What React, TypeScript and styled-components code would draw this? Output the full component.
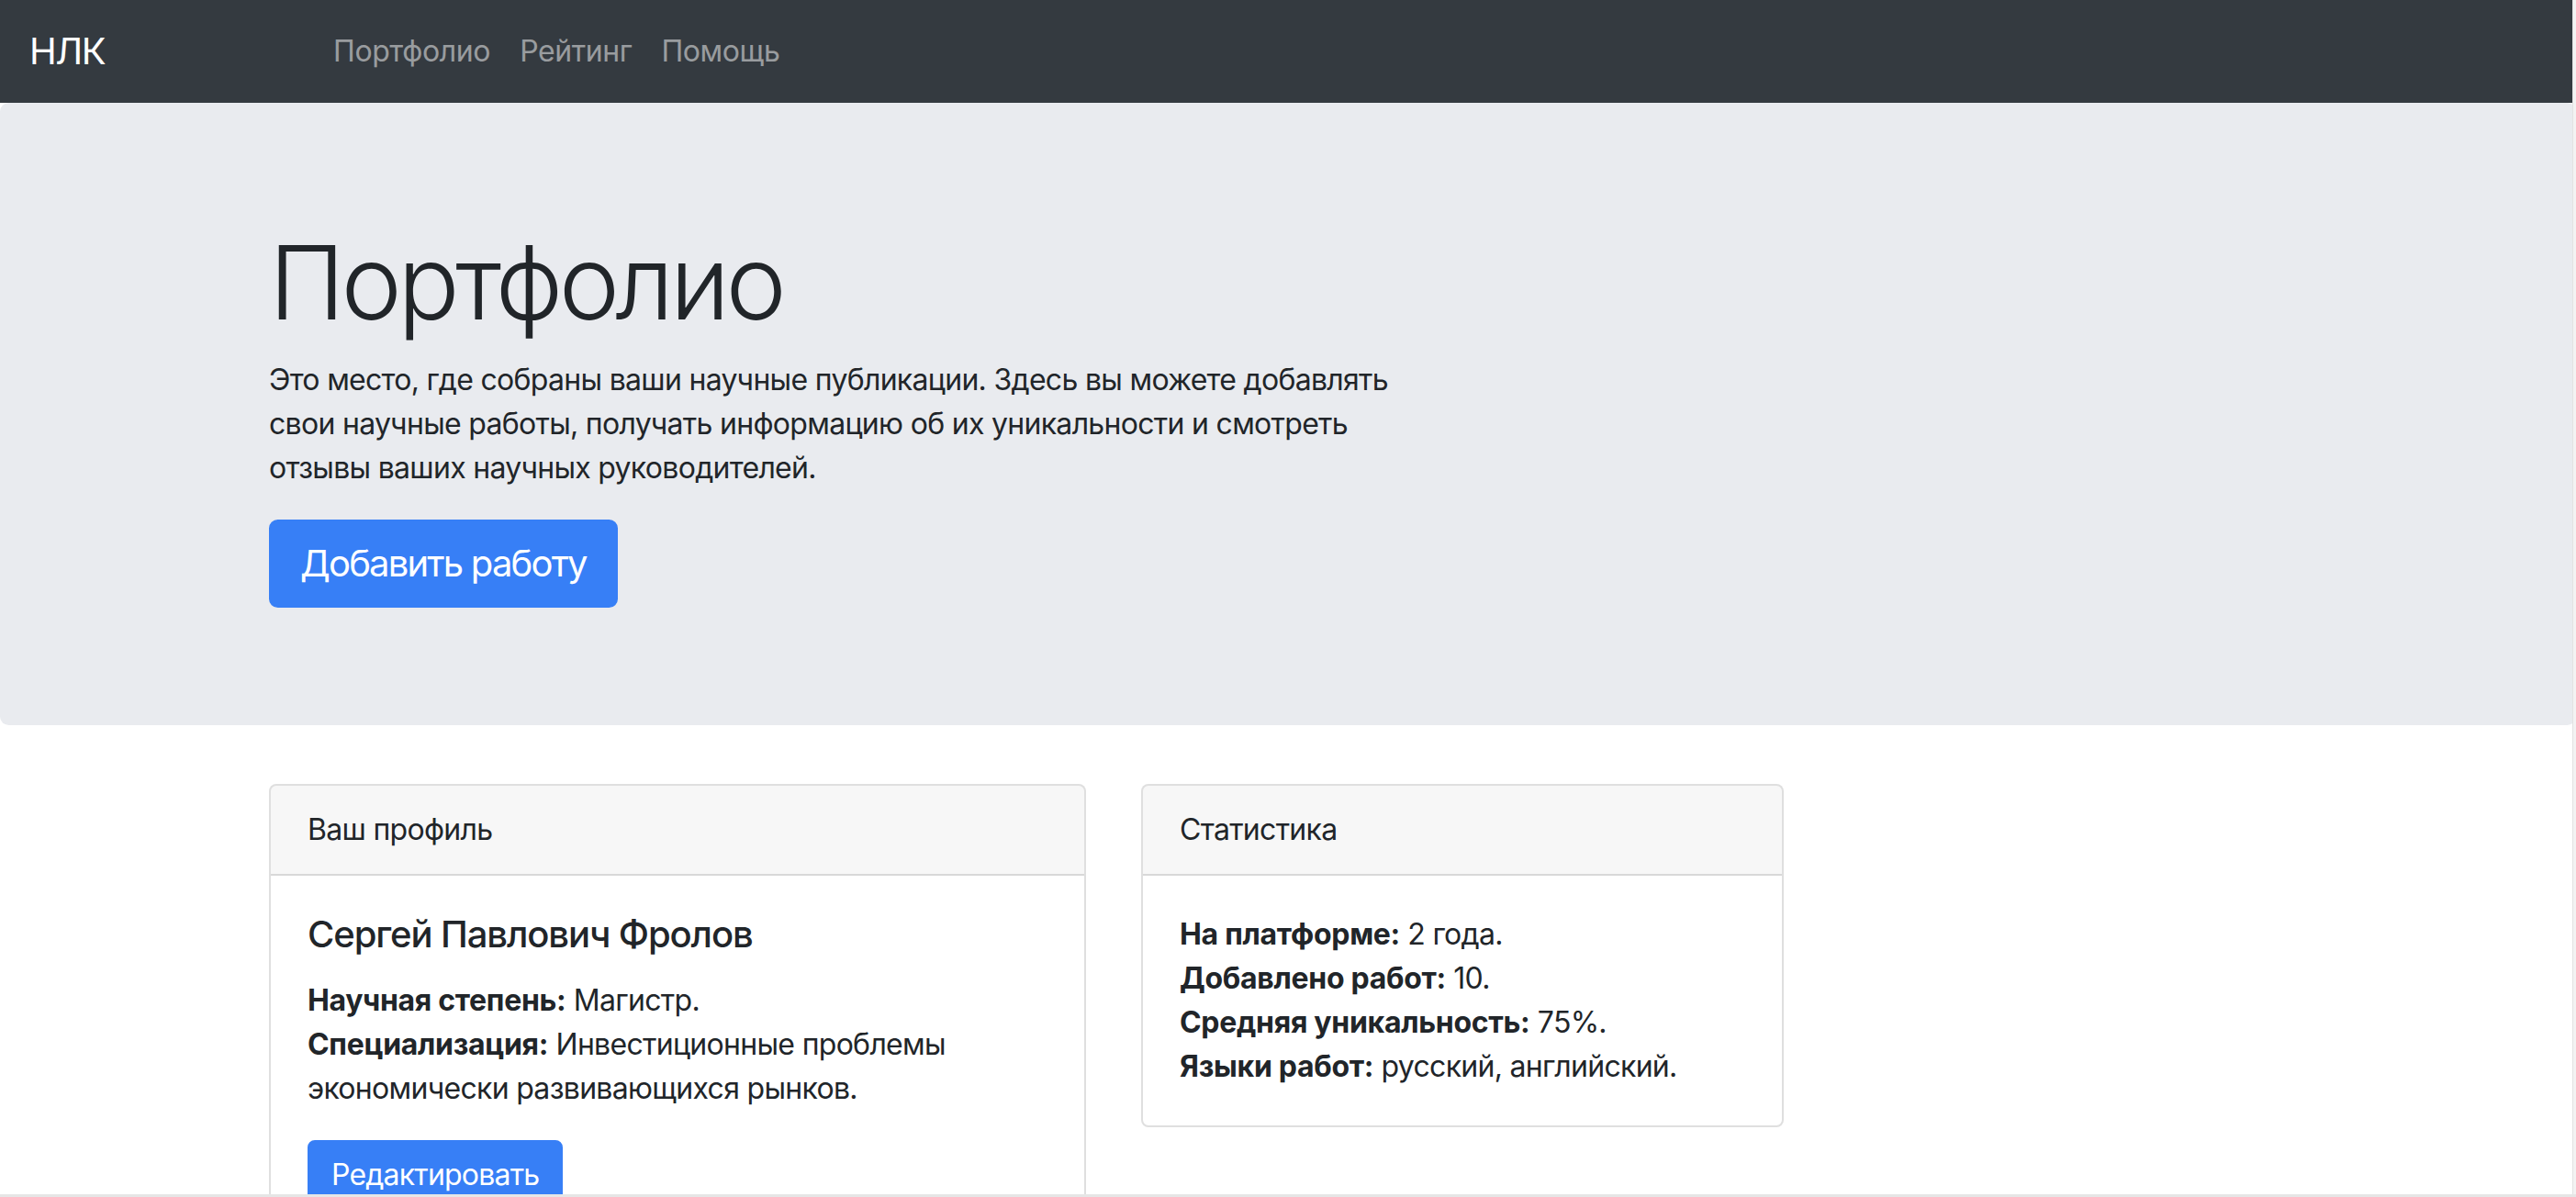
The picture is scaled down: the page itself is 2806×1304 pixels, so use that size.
import React from "react";
import styled, { createGlobalStyle } from "styled-components";

const GlobalStyle = createGlobalStyle`
  html, body {
    margin: 0;
    padding: 0;
    background: #ffffff;
    overflow: hidden;
  }
  body {
    font-family: Inter, "Noto Sans", "DejaVu Sans", sans-serif;
    font-size: 32px;
    line-height: 1.5;
    letter-spacing: -0.7px;
    color: #212529;
  }
  * { box-sizing: border-box; }
`;

const Page = styled.div`
  width: 100%;
  min-height: 100vh;
`;

const Navbar = styled.nav`
  display: flex;
  align-items: center;
  height: 112px;
  padding: 16px 32px;
  background: #343a40;
`;

const Brand = styled.a`
  display: block;
  width: 283px;
  margin-right: 32px;
  padding: 10px 0;
  font-size: 40px;
  line-height: 60px;
  letter-spacing: -1.5px;
  color: #ffffff;
  text-decoration: none;
`;

const NavList = styled.ul`
  display: flex;
  margin: 0;
  padding: 0;
  list-style: none;
`;

const NavLink = styled.a`
  display: block;
  padding: 16px;
  font-size: 32px;
  line-height: 48px;
  letter-spacing: -0.4px;
  color: rgba(255, 255, 255, 0.5);
  text-decoration: none;
`;

const Jumbotron = styled.section`
  background: #e9ebef;
  border-radius: 9.6px;
  padding: 128px 64px;
  margin-bottom: 64px;
`;

const Container = styled.div`
  width: 2280px;
  margin: 0 auto;
  padding: 0 30px;
`;

const Display = styled.h1`
  margin: 0 0 16px;
  font-size: 112px;
  font-weight: 300;
  line-height: 1.2;
  letter-spacing: -4.5px;
`;

const Lead = styled.p`
  margin: 0 0 32px;
  font-size: 32px;
  line-height: 48px;
`;

const Button = styled.button<{ $size?: "lg" | "md" }>`
  display: inline-block;
  font-family: inherit;
  color: #ffffff;
  background: #377ff6;
  border: 2px solid #377ff6;
  cursor: pointer;
  font-size: ${(p) => (p.$size === "lg" ? "40px" : "32px")};
  line-height: ${(p) => (p.$size === "lg" ? "60px" : "48px")};
  letter-spacing: ${(p) => (p.$size === "lg" ? "-1.8px" : "-0.8px")};
  padding: ${(p) => (p.$size === "lg" ? "16px 32px" : "12px 24px")};
  border-radius: ${(p) => (p.$size === "lg" ? "9.6px" : "8px")};
`;

const CardRow = styled.div`
  display: grid;
  grid-template-columns: 890px 700px;
  column-gap: 60px;
  align-items: start;
`;

const Card = styled.div`
  border: 2px solid rgba(0, 0, 0, 0.125);
  border-radius: 8px;
  background: #ffffff;
  overflow: hidden;
`;

const CardHeader = styled.div`
  padding: 24px 40px;
  background: rgba(0, 0, 0, 0.03);
  border-bottom: 2px solid rgba(0, 0, 0, 0.125);
  font-size: 32px;
  line-height: 48px;
`;

const CardBody = styled.div`
  padding: 40px;
`;

const CardTitle = styled.h5`
  margin: 0 0 24px;
  font-size: 40px;
  font-weight: 500;
  line-height: 48px;
  letter-spacing: -1.1px;
`;

const CardText = styled.p<{ $last?: boolean }>`
  margin: 0 0 ${(p) => (p.$last ? "0" : "32px")};
  font-size: 32px;
  line-height: 48px;
`;

const Label = styled.b`
  font-weight: 700;
  letter-spacing: -0.3px;
`;

const ScrollEdgeRight = styled.div`
  position: fixed;
  top: 0;
  right: 0;
  width: 4px;
  height: 100vh;
  background: #f3f3f3;
  border-left: 1px solid #e2e2e2;
`;

const ScrollEdgeBottom = styled.div`
  position: fixed;
  left: 0;
  bottom: 0;
  width: 100%;
  height: 3px;
  background: #e6e6e6;
`;

export default function App() {
  return (
    <Page>
      <GlobalStyle />
      <Navbar>
        <Brand href="#">НЛК</Brand>
        <NavList>
          <li><NavLink href="#">Портфолио</NavLink></li>
          <li><NavLink href="#">Рейтинг</NavLink></li>
          <li><NavLink href="#">Помощь</NavLink></li>
        </NavList>
      </Navbar>

      <Jumbotron>
        <Container>
          <Display>Портфолио</Display>
          <Lead>
            Это место, где собраны ваши научные публикации. Здесь вы можете добавлять
            <br />
            свои научные работы, получать информацию об их уникальности и смотреть
            <br />
            отзывы ваших научных руководителей.
          </Lead>
          <Button $size="lg">Добавить работу</Button>
        </Container>
      </Jumbotron>

      <Container>
        <CardRow>
          <Card>
            <CardHeader>Ваш профиль</CardHeader>
            <CardBody>
              <CardTitle>Сергей Павлович Фролов</CardTitle>
              <CardText>
                <Label>Научная степень:</Label> Магистр.
                <br />
                <Label>Специализация:</Label> Инвестиционные проблемы
                <br />
                экономически развивающихся рынков.
              </CardText>
              <Button $size="md">Редактировать</Button>
            </CardBody>
          </Card>
          <Card>
            <CardHeader>Статистика</CardHeader>
            <CardBody>
              <CardText $last>
                <Label>На платформе:</Label> 2 года.
                <br />
                <Label>Добавлено работ:</Label> 10.
                <br />
                <Label>Средняя уникальность:</Label> 75%.
                <br />
                <Label>Языки работ:</Label> русский, английский.
              </CardText>
            </CardBody>
          </Card>
        </CardRow>
      </Container>

      <ScrollEdgeRight />
      <ScrollEdgeBottom />
    </Page>
  );
}
